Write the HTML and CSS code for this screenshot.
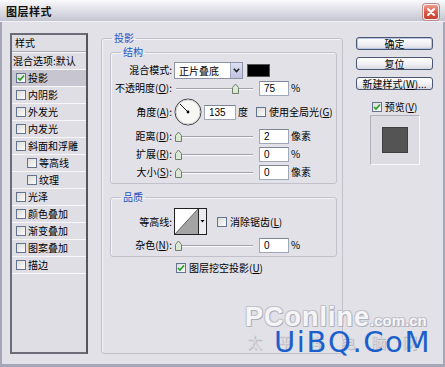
FILE: index.html
```html
<!DOCTYPE html>
<html lang="zh-CN">
<head>
<meta charset="utf-8">
<title>图层样式</title>
<link rel="stylesheet" href="styles.css">
</head>
<body>
<div class="window">
  <header class="titlebar">
    <span class="title">图层样式</span>
    <span class="close"><svg width="10" height="10" viewBox="0 0 10 10"><path d="M2 2 L8 8 M8 2 L2 8" stroke="#fff" stroke-width="2" stroke-linecap="round"/></svg></span>
  </header>
  <div class="client">
    <div class="stylelist">
      <div class="li head">样式</div>
      <div class="li blend">混合选项:默认</div>
      <div class="li sel"><span class="cb"><svg width="8" height="8" viewBox="0 0 8 8"><path d="M1 4 L3 6 L7 1.5" fill="none" stroke="#21a121" stroke-width="1.6"/></svg></span>投影</div>
      <div class="li"><span class="cb"></span>内阴影</div>
      <div class="li"><span class="cb"></span>外发光</div>
      <div class="li"><span class="cb"></span>内发光</div>
      <div class="li"><span class="cb"></span>斜面和浮雕</div>
      <div class="li sub"><span class="cb"></span>等高线</div>
      <div class="li sub"><span class="cb"></span>纹理</div>
      <div class="li"><span class="cb"></span>光泽</div>
      <div class="li"><span class="cb"></span>颜色叠加</div>
      <div class="li"><span class="cb"></span>渐变叠加</div>
      <div class="li"><span class="cb"></span>图案叠加</div>
      <div class="li"><span class="cb"></span>描边</div>
    </div>

    <fieldset class="group outer">
      <legend>投影</legend>
      <fieldset class="group inner struct">
        <legend>结构</legend>
        <div class="row">
          <span class="lbl">混合模式:</span>
          <span class="select"><span class="sel-text">正片叠底</span><span class="sel-btn"><svg width="7" height="5" viewBox="0 0 7 5"><path d="M0.8 0.8 L3.5 3.6 L6.2 0.8" fill="none" stroke="#222" stroke-width="1.5"/></svg></span></span>
          <span class="swatch"></span>
        </div>
        <div class="row">
          <span class="lbl">不透明度(<u>O</u>):</span>
          <svg class="slider" width="80" height="16" viewBox="0 0 80 16"><line x1="2" y1="8.5" x2="79" y2="8.5" stroke="#a2a2ab"/><line x1="2" y1="9.5" x2="79" y2="9.5" stroke="#fbfbfd"/><path transform="translate(58 3)" d="M0.5 10.5 V4.5 L3.5 1 L6.5 4.5 V10.5 Z" fill="#dbe8d3" stroke="#6e7e6e"/></svg>
          <span class="field">75</span>
          <span class="unit">%</span>
        </div>
        <div class="row r-angle">
          <span class="lbl">角度(<u>A</u>):</span>
          <svg class="dial" width="28" height="28" viewBox="0 0 28 28"><circle cx="14" cy="14" r="13" fill="#f7f7f4" stroke="#3c3c3c"/><circle cx="14" cy="14" r="12" fill="none" stroke="#d0d0d0"/><line x1="14" y1="14" x2="6" y2="6" stroke="#222" stroke-width="1"/><circle cx="14" cy="14" r="1.4" fill="#000"/></svg>
          <span class="field wide">135</span>
          <span class="unit">度</span>
          <span class="cb global"></span>
          <span class="opt">使用全局光(<u>G</u>)</span>
        </div>
        <div class="row">
          <span class="lbl">距离(<u>D</u>):</span>
          <svg class="slider" width="80" height="16" viewBox="0 0 80 16"><line x1="2" y1="8.5" x2="79" y2="8.5" stroke="#a2a2ab"/><line x1="2" y1="9.5" x2="79" y2="9.5" stroke="#fbfbfd"/><path transform="translate(1 3)" d="M0.5 10.5 V4.5 L3.5 1 L6.5 4.5 V10.5 Z" fill="#dbe8d3" stroke="#6e7e6e"/></svg>
          <span class="field">2</span>
          <span class="unit">像素</span>
        </div>
        <div class="row">
          <span class="lbl">扩展(<u>R</u>):</span>
          <svg class="slider" width="80" height="16" viewBox="0 0 80 16"><line x1="2" y1="8.5" x2="79" y2="8.5" stroke="#a2a2ab"/><line x1="2" y1="9.5" x2="79" y2="9.5" stroke="#fbfbfd"/><path transform="translate(1 3)" d="M0.5 10.5 V4.5 L3.5 1 L6.5 4.5 V10.5 Z" fill="#dbe8d3" stroke="#6e7e6e"/></svg>
          <span class="field">0</span>
          <span class="unit">%</span>
        </div>
        <div class="row">
          <span class="lbl">大小(<u>S</u>):</span>
          <svg class="slider" width="80" height="16" viewBox="0 0 80 16"><line x1="2" y1="8.5" x2="79" y2="8.5" stroke="#a2a2ab"/><line x1="2" y1="9.5" x2="79" y2="9.5" stroke="#fbfbfd"/><path transform="translate(1 3)" d="M0.5 10.5 V4.5 L3.5 1 L6.5 4.5 V10.5 Z" fill="#dbe8d3" stroke="#6e7e6e"/></svg>
          <span class="field">0</span>
          <span class="unit">像素</span>
        </div>
      </fieldset>

      <fieldset class="group inner quality">
        <legend>品质</legend>
        <div class="row r-contour">
          <span class="lbl">等高线:</span>
          <svg class="contour" width="33" height="27" viewBox="0 0 33 27"><rect x="0.5" y="0.5" width="32" height="26" fill="#fff" stroke="#222"/><path d="M1 26 L24 1 L24 26 Z" fill="#a4a4a4"/><line x1="1" y1="26" x2="24" y2="1" stroke="#666"/><rect x="24.5" y="0.5" width="8" height="26" fill="#ececf0" stroke="#222"/><path d="M26.5 12 H30.5 L28.5 14.5 Z" fill="#000"/></svg>
          <span class="cb anti"></span>
          <span class="opt">消除锯齿(<u>L</u>)</span>
        </div>
        <div class="row">
          <span class="lbl">杂色(<u>N</u>):</span>
          <svg class="slider" width="80" height="16" viewBox="0 0 80 16"><line x1="2" y1="8.5" x2="79" y2="8.5" stroke="#a2a2ab"/><line x1="2" y1="9.5" x2="79" y2="9.5" stroke="#fbfbfd"/><path transform="translate(1 3)" d="M0.5 10.5 V4.5 L3.5 1 L6.5 4.5 V10.5 Z" fill="#dbe8d3" stroke="#6e7e6e"/></svg>
          <span class="field">0</span>
          <span class="unit">%</span>
        </div>
      </fieldset>

      <div class="knockout">
        <span class="cb"><svg width="8" height="8" viewBox="0 0 8 8"><path d="M1 4 L3 6 L7 1.5" fill="none" stroke="#21a121" stroke-width="1.6"/></svg></span>
        <span class="opt">图层挖空投影(<u>U</u>)</span>
      </div>
    </fieldset>

    <div class="actions">
      <button class="btn default">确定</button>
      <button class="btn">复位</button>
      <button class="btn">新建样式(<u>W</u>)...</button>
      <div class="preview-check">
        <span class="cb"><svg width="8" height="8" viewBox="0 0 8 8"><path d="M1 4 L3 6 L7 1.5" fill="none" stroke="#21a121" stroke-width="1.6"/></svg></span>
        <span class="opt">预览(<u>V</u>)</span>
      </div>
      <div class="preview"><span class="thumb"></span></div>
    </div>
  </div>

  <div class="watermark">
    <div class="wm-pc">PConline<span class="wm-dom">.com.cn</span></div>
    <div class="wm-cn">太平洋电脑网</div>
    <div class="wm-uibq">UiBQ.CoM</div>
  </div>
</div>
</body>
</html>
```

FILE: styles.css
```css
* { box-sizing: border-box; }

html, body {
  margin: 0;
  padding: 0;
}

body {
  width: 445px;
  height: 367px;
  overflow: hidden;
  font-family: "Noto Sans CJK SC", "Liberation Sans", sans-serif;
  font-size: 10px;
  line-height: 12px;
  color: #000;
  background: #e2e1e8;
}

u { text-decoration: underline; text-underline-offset: 1px; }

.window {
  position: relative;
  width: 445px;
  height: 367px;
  display: flex;
  flex-direction: column;
  background: #e2e1e8;
}

/* title bar */
.titlebar {
  height: 22px;
  flex: none;
  display: flex;
  align-items: center;
  justify-content: space-between;
  padding: 0 6px 0 6px;
  background: linear-gradient(#fbfbfd 0%, #e6e6ec 35%, #d2d2dc 75%, #c4c4d0 100%);
  border-bottom: 1px solid #f2f2f6;
}

.title {
  font-weight: bold;
  font-size: 11px;
  color: #111;
  letter-spacing: 0.5px;
}

.close {
  width: 16px;
  height: 16px;
  margin-top: 2px;
  border-radius: 3px;
  border: 1px solid #f6f0f0;
  background: linear-gradient(#ee9a8c, #d9594a 55%, #c8402f);
  display: flex;
  align-items: center;
  justify-content: center;
  box-shadow: 0 0 0 1px #b98a86;
}

/* client area */
.client {
  flex: 1;
  display: flex;
  align-items: stretch;
  padding: 11px 10px 10px 8px;
  border-left: 2px solid #a6a6b9;
  border-right: 2px solid #a6a6b9;
  border-bottom: 3px solid #a6a6b9;
}

/* style list */
.stylelist {
  width: 78px;
  flex: none;
  display: flex;
  flex-direction: column;
  border: 2px solid #6c6c76;
  border-right-color: #55555e;
  background: #dfdee5;
}

.li {
  height: 17px;
  flex: none;
  display: flex;
  align-items: center;
  padding-left: 3px;
  border-bottom: 1px solid #f7f7fa;
  white-space: nowrap;
}

.li.head {
  height: 17px;
  padding-left: 3px;
  border-bottom: 1px solid #a9a9b3;
  box-shadow: 0 1px 0 #fafafc;
}

.li.blend {
  height: 18px;
  padding-left: 1px;
  padding-top: 1px;
}

.li.sel { background: #c7c6d0; }

.li.sub { padding-left: 14px; }

.cb {
  width: 10px;
  height: 10px;
  flex: none;
  display: inline-flex;
  align-items: center;
  justify-content: center;
  border: 1px solid #64748e;
  background: linear-gradient(135deg, #dcdcd8, #fbfbfb);
  margin-right: 2px;
}

.li .cb { margin-left: 1px; }

/* group boxes */
.group {
  margin: 0;
  min-width: 0;
  border: 1px solid #c2c1cb;
  border-radius: 3px;
  box-shadow: inset 1px 1px 0 #f4f4f7;
}

.group > legend {
  color: #2255c4;
  padding: 0 2px;
  line-height: 12px;
  font-size: 10px;
}

.outer {
  width: 242px;
  flex: none;
  margin-left: 13px;
  margin-top: -1px;
  padding: 2px 5px 0 8px;
}

.outer > legend { margin-left: 2px; }

.inner {
  padding: 0 0 3px 0;
}

.inner > legend { margin-left: 10px; }

.struct .row:first-of-type { margin-top: 4px; }

.row {
  display: flex;
  align-items: center;
  height: 16px;
  margin-top: 2px;
  white-space: nowrap;
}

.r-angle { height: 28px; }

.lbl {
  width: 61px;
  flex: none;
  text-align: right;
  margin-right: 2px;
}

.select {
  width: 69px;
  height: 17px;
  display: flex;
  background: #fff;
  border: 1px solid #8e93a6;
}

.sel-text {
  flex: 1;
  padding-left: 4px;
  line-height: 15px;
}

.sel-btn {
  width: 12px;
  flex: none;
  display: flex;
  align-items: center;
  justify-content: center;
  background: linear-gradient(#dcdff0, #bfc3df);
  border-left: 1px solid #a6aac4;
}

.swatch {
  width: 23px;
  height: 13px;
  margin-left: 4px;
  background: #000;
  border: 1px solid #555;
}

.slider { flex: none; }

.field {
  width: 30px;
  height: 15px;
  margin-left: 5px;
  flex: none;
  background: #fff;
  border: 1px solid #a0a7b8;
  border-top-color: #7f869a;
  padding-left: 4px;
  line-height: 13px;
  font-family: "Liberation Sans", "Noto Sans CJK SC", sans-serif;
  font-size: 10px;
}

.field.wide { width: 32px; margin-left: 2px; }

.unit { margin-left: 2px; }

.dial { flex: none; }

.cb.global { margin-left: 8px; }

.opt { margin-left: 1px; }

.quality { margin-top: 7px; }

.r-contour { height: 27px; margin-top: 5px; }

.contour { flex: none; }

.cb.anti { margin-left: 10px; }

.knockout {
  display: flex;
  align-items: center;
  height: 14px;
  margin-top: 4px;
  padding-left: 66px;
}

/* right column */
.actions {
  width: 77px;
  flex: none;
  margin-left: 13px;
  padding-top: 4px;
  display: flex;
  flex-direction: column;
  align-items: center;
}

.btn {
  width: 77px;
  height: 13px;
  margin: 0 0 7px 0;
  padding: 0;
  font-family: "Noto Sans CJK SC", "Liberation Sans", sans-serif;
  font-size: 10px;
  line-height: 11px;
  color: #000;
  border: 1px solid #4b5672;
  border-radius: 3px;
  background: linear-gradient(#ffffff, #f0f0f4 55%, #d8d8e2);
}

.btn.default { box-shadow: inset 0 0 0 1px #b8c4e4; }

.preview-check {
  display: flex;
  align-items: center;
  height: 12px;
  margin-top: 4px;
}

.preview {
  width: 50px;
  height: 50px;
  margin-top: 2px;
  display: flex;
  align-items: center;
  justify-content: center;
  background: #dddce3;
  border: 1px solid #f8f8fb;
  border-top-color: #b2b1bb;
  border-left-color: #b2b1bb;
}

.thumb {
  width: 26px;
  height: 26px;
  background: #545454;
  border: 1px solid #3e3e3e;
}

/* watermark overlay */
.watermark {
  position: absolute;
  left: 244px;
  top: 300px;
  width: 200px;
  height: 60px;
  pointer-events: none;
}

.wm-pc {
  position: absolute;
  left: 1px;
  top: 2px;
  font-family: "Liberation Sans", sans-serif;
  font-weight: bold;
  font-size: 27px;
  line-height: 30px;
  letter-spacing: 1px;
  color: #f5f5f7;
  text-shadow: 1px 1px 0 #aeaeb8, -1px -1px 0 #c4c4cc, 1px -1px 0 #c4c4cc, -1px 1px 0 #c4c4cc;
}

.wm-dom {
  font-size: 15px;
  letter-spacing: 0;
}

.wm-cn {
  position: absolute;
  left: 3px;
  top: 33px;
  font-size: 15px;
  line-height: 18px;
  letter-spacing: 16px;
  color: #d8d8de;
  text-shadow: 1px 1px 0 #b8b8c0;
}

.wm-uibq {
  position: absolute;
  left: 30px;
  top: 25px;
  font-family: "DejaVu Sans", sans-serif;
  font-size: 29px;
  line-height: 34px;
  letter-spacing: 1.6px;
  color: #1b5fcc;
}
```
